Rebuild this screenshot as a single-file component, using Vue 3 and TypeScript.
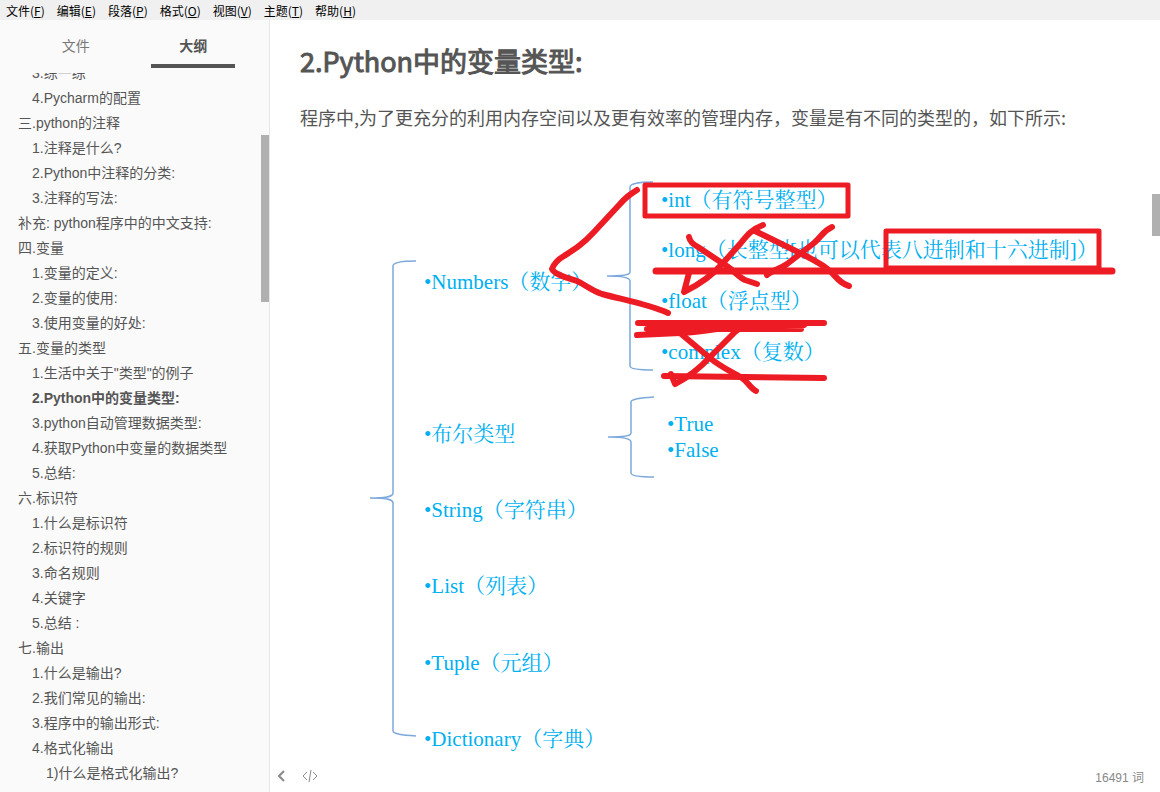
<script setup lang="ts">
import { ref } from 'vue'

interface MenuEntry { label: string; key: string }
interface OutlineEntry { text: string; level: number }
interface DiagramLabel { text: string; x: number; y: number }

const menus: MenuEntry[] = [
  { label: '文件', key: 'F' },
  { label: '编辑', key: 'E' },
  { label: '段落', key: 'P' },
  { label: '格式', key: 'O' },
  { label: '视图', key: 'V' },
  { label: '主题', key: 'T' },
  { label: '帮助', key: 'H' },
]

const tabs: string[] = ['文件', '大纲']
const activeTab = ref('大纲')

const outline: OutlineEntry[] = [
  { text: '3.练一练', level: 2 },
  { text: '4.Pycharm的配置', level: 2 },
  { text: '三.python的注释', level: 1 },
  { text: '1.注释是什么?', level: 2 },
  { text: '2.Python中注释的分类:', level: 2 },
  { text: '3.注释的写法:', level: 2 },
  { text: '补充: python程序中的中文支持:', level: 1 },
  { text: '四.变量', level: 1 },
  { text: '1.变量的定义:', level: 2 },
  { text: '2.变量的使用:', level: 2 },
  { text: '3.使用变量的好处:', level: 2 },
  { text: '五.变量的类型', level: 1 },
  { text: '1.生活中关于"类型"的例子', level: 2 },
  { text: '2.Python中的变量类型:', level: 2 },
  { text: '3.python自动管理数据类型:', level: 2 },
  { text: '4.获取Python中变量的数据类型', level: 2 },
  { text: '5.总结:', level: 2 },
  { text: '六.标识符', level: 1 },
  { text: '1.什么是标识符', level: 2 },
  { text: '2.标识符的规则', level: 2 },
  { text: '3.命名规则', level: 2 },
  { text: '4.关键字', level: 2 },
  { text: '5.总结 :', level: 2 },
  { text: '七.输出', level: 1 },
  { text: '1.什么是输出?', level: 2 },
  { text: '2.我们常见的输出:', level: 2 },
  { text: '3.程序中的输出形式:', level: 2 },
  { text: '4.格式化输出', level: 2 },
  { text: '1)什么是格式化输出?', level: 3 },
]
const current = ref('2.Python中的变量类型:')

const labels: DiagramLabel[] = [
  { text: '•Numbers（数字）', x: 424, y: 289 },
  { text: '•int（有符号整型）', x: 661, y: 207 },
  { text: '•long（长整型[也可以代表八进制和十六进制]）', x: 661, y: 257 },
  { text: '•float（浮点型）', x: 661, y: 308 },
  { text: '•complex（复数）', x: 661, y: 359 },
  { text: '•布尔类型', x: 424, y: 441 },
  { text: '•True', x: 667, y: 431 },
  { text: '•False', x: 667, y: 457 },
  { text: '•String（字符串）', x: 424, y: 517 },
  { text: '•List（列表）', x: 424, y: 593 },
  { text: '•Tuple（元组）', x: 424, y: 670 },
  { text: '•Dictionary（字典）', x: 424, y: 746 },
]
</script>

<template>
  <div class="app">
    <nav class="menubar" aria-label="菜单">
      <button v-for="m in menus" :key="m.key" type="button">{{ m.label }}(<u>{{ m.key }}</u>)</button>
    </nav>
    <div class="body">
      <aside class="sidebar">
        <div class="tabs" role="tablist">
          <button
            v-for="t in tabs"
            :key="t"
            type="button"
            role="tab"
            :aria-selected="t === activeTab"
            :class="{ active: t === activeTab }"
            @click="activeTab = t"
          >{{ t }}</button>
        </div>
        <nav class="outline" aria-label="大纲">
          <ul>
            <li v-for="(o, i) in outline" :key="i" :class="'level' + o.level">
              <a href="#" :class="{ current: o.text === current }" @click.prevent="current = o.text">{{ o.text }}</a>
            </li>
          </ul>
        </nav>
        <span class="thumb side-thumb"></span>
      </aside>
      <main class="editor">
        <article>
          <h2>2.Python中的变量类型:</h2>
          <p>程序中,为了更充分的利用内存空间以及更有效率的管理内存，变量是有不同的类型的，如下所示:</p>
          <svg class="diagram" viewBox="300 160 830 600" role="img" aria-label="Python 变量类型">
            <g class="brace">
              <path d="M416 261C402 261 393 262 393 266V493C393 497 386 498 370 498C386 498 393 499 393 503V731C393 734 402 735 416 736" />
              <path d="M653 182C639 182 630 184 630 187V272C630 275 623 276 607 276C623 276 630 278 630 281V366C630 369 639 370 653 370" />
              <path d="M654 397C640 398 631 399 631 402V433C631 436 624 437 608 437C624 437 631 439 631 442V473C631 476 640 477 654 477" />
            </g>
            <text v-for="l in labels" :key="l.text" :x="l.x" :y="l.y">{{ l.text }}</text>
            <g class="marker">
              <rect class="thin" x="645" y="185" width="203" height="31" />
              <rect class="thin" x="886" y="231" width="213" height="37" />
              <path class="thick" d="M656 271H1112" />
              <path d="M637 190C629 195 626 197 620 204L594 232C583 244 575 249 564 256C557 260 554 264 552 269C554 274 565 277 577 281C586 285 590 290 602 294C624 300 648 304 668 313" />
              <path d="M689 237C690 242 693 244 698 247L722 263C733 269 738 277 745 280L757 284" />
              <path d="M763 225C750 230 746 237 740 244L723 263C713 275 700 284 684 292L689 273" />
              <path d="M755 231L804 255C814 260 825 266 831 272C837 278 841 284 849 286" />
              <path d="M832 227C823 231 822 236 814 243L787 264C780 269 773 270 767 275" />
              <path d="M638 323H824" />
              <path d="M647 329H801M650 327L804 325" />
              <path d="M637 335L680 333C703 332 714 328 746 327" />
              <path d="M680 333L710 358C722 368 731 371 742 378C748 382 751 389 756 391" />
              <path d="M745 323C744 328 739 328 735 332L710 357C700 368 687 378 675 384L671 374" />
              <path d="M664 376L824 378" />
            </g>
          </svg>
        </article>
        <footer>
          <button type="button" aria-label="收起侧边栏">
            <svg width="14" height="14" viewBox="0 0 14 14"><path class="chevron" d="M9 2L4 7L9 12" /></svg>
          </button>
          <button type="button" aria-label="源代码模式">
            <svg width="16" height="14" viewBox="0 0 16 14"><path d="M5 3L1 7L5 11M11 3L15 7L11 11M9 1L7 13" /></svg>
          </button>
          <button type="button" class="count">16491 词</button>
        </footer>
        <span class="thumb page-thumb"></span>
      </main>
    </div>
  </div>
</template>

<style>
body {
  margin: 0;
  background: #fff;
}
</style>

<style scoped>
.app {
  display: flex;
  flex-direction: column;
  height: 100vh;
  overflow: hidden;
  color: #555;
  font-family: "Liberation Sans", "Noto Sans CJK SC", sans-serif;
}
button {
  margin: 0;
  padding: 0;
  border: 0;
  background: none;
  color: inherit;
  font: inherit;
}
.menubar {
  display: flex;
  flex: none;
  height: 20px;
  background: #f0f0f0;
  color: #000;
  font: 12px/20px "Noto Sans CJK SC", sans-serif;
}
.menubar button {
  padding: 1px 6px 0;
  white-space: nowrap;
}
.body {
  display: flex;
  flex: 1;
  min-height: 0;
}
.sidebar {
  position: relative;
  display: flex;
  flex-direction: column;
  flex: none;
  width: 269px;
  border-right: 1px solid #e6e6e6;
  background: #fafafa;
  font-size: 14px;
}
.tabs {
  display: flex;
  justify-content: space-evenly;
  flex: none;
  height: 48px;
  margin-bottom: 5px;
}
.tabs button {
  box-sizing: border-box;
  width: 84px;
  padding-top: 6px;
  border-bottom: 4px solid transparent;
  color: #777;
}
.tabs .active {
  border-color: #555;
  color: #555;
  font-weight: 700;
}
.outline {
  flex: 1;
  min-height: 0;
  overflow: hidden;
}
.outline ul {
  margin: -12px 0 0;
  padding: 0;
  list-style: none;
}
.outline li {
  height: 25px;
  line-height: 25px;
  white-space: nowrap;
}
.level1 { padding-left: 18px; }
.level2 { padding-left: 32px; }
.level3 { padding-left: 46px; }
.outline a {
  color: #555;
  text-decoration: none;
}
.outline .current {
  font-weight: 700;
}
.thumb {
  position: absolute;
  right: 0;
  width: 8px;
  background: #b0b0b0;
}
.side-thumb {
  top: 115px;
  height: 167px;
}
.page-thumb {
  top: 174px;
  height: 42px;
}
.editor {
  position: relative;
  display: flex;
  flex-direction: column;
  flex: 1;
  min-width: 0;
}
article {
  flex: 1;
  min-height: 0;
  padding: 23px 30px 0;
  overflow: hidden;
  font-family: "Noto Sans CJK SC", sans-serif;
}
h2 {
  margin: 0 0 23px;
  font-size: 27px;
  line-height: 36px;
  font-weight: 400;
  -webkit-text-stroke: 1px #555;
}
p {
  margin: 0 0 28px;
  font-size: 18px;
  line-height: 30px;
}
.diagram {
  display: block;
  width: 830px;
  max-width: 100%;
}
.diagram text {
  fill: #00b0f0;
  font: 21px "Liberation Serif", "Noto Serif CJK SC", "Noto Sans CJK SC", serif;
}
.brace path {
  fill: none;
  stroke: #7da9dc;
  stroke-width: 1.5;
}
.marker {
  fill: none;
  stroke: #ed1c24;
  stroke-width: 6;
  stroke-linecap: round;
  stroke-linejoin: round;
}
.marker .thin { stroke-width: 5; }
.marker .thick { stroke-width: 7; }
footer {
  display: flex;
  align-items: center;
  flex: none;
  height: 32px;
  padding: 0 16px 0 5px;
  gap: 13px;
  color: #888;
  font-size: 12px;
}
footer button {
  display: flex;
}
footer svg {
  fill: none;
  stroke: #888;
}
.chevron {
  stroke-width: 2;
}
.count {
  margin-left: auto;
}
</style>
